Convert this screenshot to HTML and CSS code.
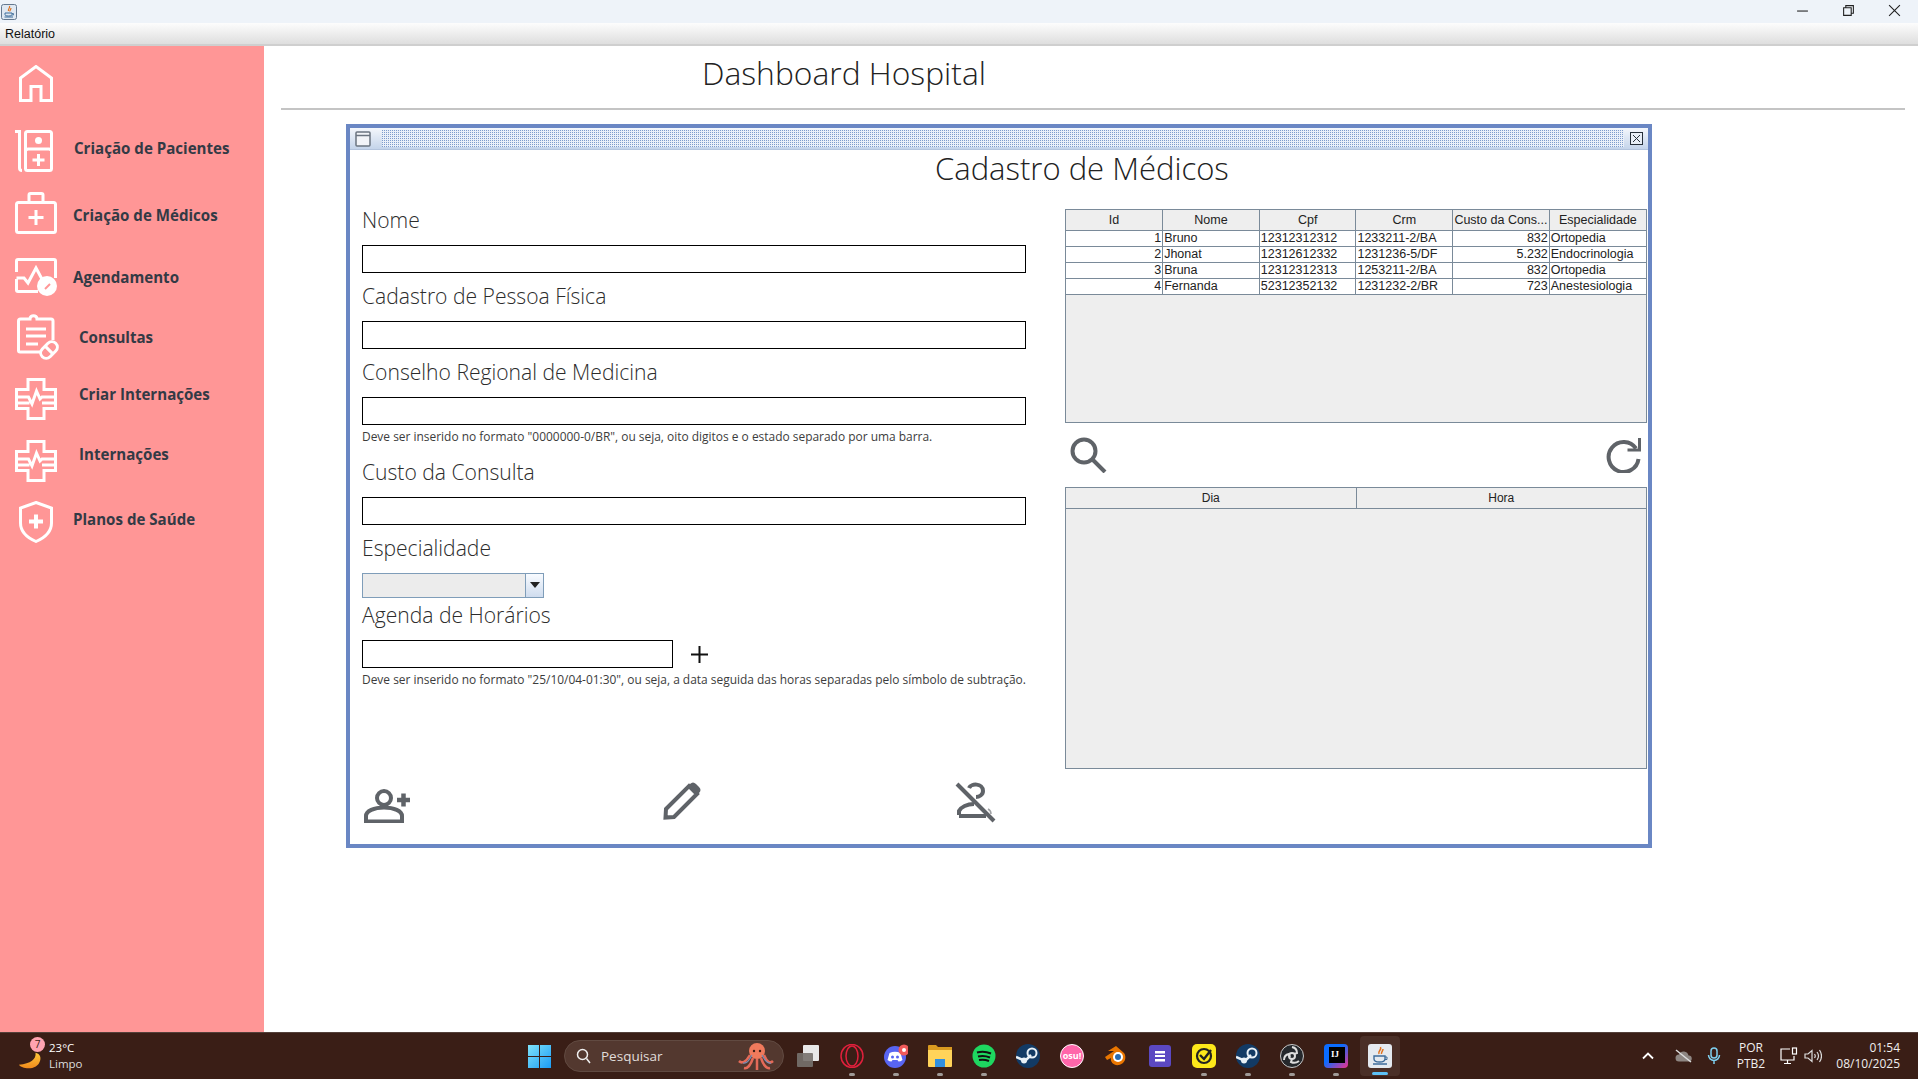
FILE: index.html
```html
<!DOCTYPE html>
<html lang="pt-BR">
<head>
<meta charset="utf-8">
<title>Dashboard Hospital</title>
<link rel="stylesheet" href="styles.css">
</head>
<body>
<div class="app">
  <header class="titlebar">
    <svg class="java-icon" viewBox="0 0 16 16"><rect x=".5" y=".5" width="15" height="15" rx="2" fill="#dfe8f2" stroke="#64788f"/><path d="M8.500 2c1 2-2 3-1 5M10 4c0 1.500-1.500 2-1 3.500" fill="none" stroke="#e0731f" stroke-width="1.200"/><path d="M4 9h7v1.500c0 1-1 1.500-3.500 1.500S4 11.500 4 10.500zM3.500 13h8.500" fill="none" stroke="#3d6c9a" stroke-width="1"/><path d="M11 9.500h1.500v1.500H11" fill="none" stroke="#3d6c9a" stroke-width=".8"/></svg>
    <div class="win-controls">
      <svg class="wc" viewBox="0 0 12 12"><path d="M1 6.500h10" class="wc-line"/></svg>
      <svg class="wc" viewBox="0 0 12 12"><path d="M1.500 3.500h7v7h-7zM3.500 3.500V1.500h7v7H8.500" class="wc-line"/></svg>
      <svg class="wc" viewBox="0 0 12 12"><path d="M1 1l10 10M11 1L1 11" class="wc-line"/></svg>
    </div>
  </header>
  <nav class="menubar"><span class="menu-item">Relatório</span></nav>

  <div class="workspace">
    <aside class="sidebar">
      <a class="nav-item n-home">
        <span class="nav-icon"><svg class="ico i-home" viewBox="0 0 34 37"><path d="M1.500 35.500V13L17 1.500 32.500 13v22.500H22v-14H12v14z"/></svg></span>
      </a>
      <a class="nav-item n-pac">
        <span class="nav-icon"><svg class="ico i-pac" viewBox="0 0 38 42"><path d="M0 1.500h4.500V38q0 2.500 2.500 2.500"/><rect x="10.500" y="1.500" width="26" height="39" rx="2"/><circle class="solid" cx="23.500" cy="10.500" r="3.500"/><path d="M11 21q0-2 2-2h21q2 0 2 2M23.500 24v12M17.500 30h12"/></svg></span>
        <span class="nav-label">Criação de Pacientes</span>
      </a>
      <a class="nav-item n-med">
        <span class="nav-icon"><svg class="ico i-wide" viewBox="0 0 42 42"><rect x="1.500" y="10.500" width="39" height="30" rx="2"/><path d="M14 10V3q0-1.500 1.500-1.500h11Q28 1.500 28 3v7M21 18v15M13.500 25.500h15"/></svg></span>
        <span class="nav-label">Criação de Médicos</span>
      </a>
      <a class="nav-item n-ag">
        <span class="nav-icon"><svg class="ico i-ag" viewBox="0 0 42 38"><path d="M1.500 14V3q0-1.500 1.500-1.500h36q1.500 0 1.500 1.500v17M1.500 21v11q0 1.500 1.500 1.500h20M1.500 20H9l4 5 8-15 7 13"/><circle class="solid" cx="32" cy="28" r="10"/><path class="tick" d="M30 31l5-5"/></svg></span>
        <span class="nav-label">Agendamento</span>
      </a>
      <a class="nav-item n-cons">
        <span class="nav-icon"><svg class="ico i-cons" viewBox="0 0 42 46"><path d="M25 38H3q-1.500 0-1.500-1.500V7Q1.500 5 3.500 5H13c0-4.500 7-4.500 7 0h14q2 0 2 2v19"/><path d="M9 15h20M9 22h20M9 30h12"/><g transform="rotate(-45 32 36)"><rect x="22.500" y="30.500" width="19" height="11" rx="5.500"/><path d="M32 30.500v11"/></g></svg></span>
        <span class="nav-label">Consultas</span>
      </a>
      <a class="nav-item n-criar">
        <span class="nav-icon"><svg class="ico i-wide" viewBox="0 0 42 42"><path d="M1.500 11.500h11.500v-10h16v10h11.500v19H29v10H13v-10H1.500z"/><path d="M1.500 19h12l3.500 7 4.500-13 3.500 8 2-2h13.500M1.500 25h13M27 25h13.500"/></svg></span>
        <span class="nav-label">Criar Internações</span>
      </a>
      <a class="nav-item n-int">
        <span class="nav-icon"><svg class="ico i-wide" viewBox="0 0 42 42"><path d="M1.500 11.500h11.500v-10h16v10h11.500v19H29v10H13v-10H1.500z"/><path d="M1.500 19h12l3.500 7 4.500-13 3.500 8 2-2h13.500M1.500 25h13M27 25h13.500"/></svg></span>
        <span class="nav-label">Internações</span>
      </a>
      <a class="nav-item n-plan">
        <span class="nav-icon"><svg class="ico i-plan" viewBox="0 0 34 42"><path d="M17 1.500 32.500 7v15C32.500 31 25 37 17 40.500 9 37 1.500 31 1.500 22V7z"/><path class="thick" d="M17 13.500v14M10 20.500h14"/></svg></span>
        <span class="nav-label">Planos de Saúde</span>
      </a>
    </aside>

    <main class="content">
      <div class="page-head"><h1 class="page-title">Dashboard Hospital</h1></div>

      <section class="frame">
        <div class="frame-bar">
          <svg class="frame-icon" viewBox="0 0 16 16"><rect x="1" y="1" width="14" height="14" rx="1" fill="#f2f4f8" stroke="#6b7480" stroke-width="1.500"/><path d="M1 4.500h14" stroke="#6b7480" stroke-width="1.500"/></svg>
          <div class="frame-dots"></div>
          <svg class="frame-close" viewBox="0 0 13 13"><rect x=".5" y=".5" width="12" height="12" fill="#e8eef6" stroke="#27303a"/><path d="M3 3l7 7M10 3l-7 7" stroke="#27303a"/></svg>
        </div>

        <div class="frame-body">
          <h2 class="frame-title">Cadastro de Médicos</h2>
          <div class="frame-columns">
            <form class="form">
              <label class="field-label">Nome</label>
              <div class="input"></div>
              <label class="field-label">Cadastro de Pessoa Física</label>
              <div class="input"></div>
              <label class="field-label">Conselho Regional de Medicina</label>
              <div class="input"></div>
              <p class="hint">Deve ser inserido no formato "0000000-0/BR", ou seja, oito digitos e o estado separado por uma barra.</p>
              <label class="field-label">Custo da Consulta</label>
              <div class="input"></div>
              <label class="field-label">Especialidade</label>
              <div class="combo"><span class="combo-arrow"></span></div>
              <label class="field-label label-tight">Agenda de Horários</label>
              <div class="agenda-row">
                <div class="input input-short"></div>
                <svg class="plus" viewBox="0 0 17 17"><path d="M8.500 0v17M0 8.500h17"/></svg>
              </div>
              <p class="hint">Deve ser inserido no formato "25/10/04-01:30", ou seja, a data seguida das horas separadas pelo símbolo de subtração.</p>
              <div class="actions">
                <svg class="act a-add" viewBox="0 0 48 34"><circle cx="21" cy="9" r="7"/><path d="M3 32.500V27c0-5 8-8.500 18-8.500S39 22 39 27v5.500z"/><path d="M34 11h13M40.500 4.500v13" class="act-thick"/></svg>
                <svg class="act a-edit" viewBox="0 0 38 38"><path d="M2.500 35.500 3 27 26 4l8 8-23 23z" fill="none"/><path class="act-fill" d="M27 2c2-2 4-2 6 0l3 3c2 2 2 4 0 6l-2 2-9-9z"/></svg>
                <svg class="act a-del" viewBox="0 0 41 41"><path d="M14 6c2-5 14-5 14 3 0 4-4 6-7 6"/><path d="M4 33v-4c2-4 8-7 15-7M4 34h27" /><path d="M33 27c2 1 3 3 3 5" class="act-faint"/><path d="M2 2l37 37"/></svg>
              </div>
            </form>

            <div class="tables">
              <div class="table-pane pane-doctors">
                <table class="grid">
                  <thead><tr><th>Id</th><th>Nome</th><th>Cpf</th><th>Crm</th><th>Custo da Cons...</th><th>Especialidade</th></tr></thead>
                  <tbody>
                    <tr><td class="num">1</td><td>Bruno</td><td>12312312312</td><td>1233211-2/BA</td><td class="num">832</td><td>Ortopedia</td></tr>
                    <tr><td class="num">2</td><td>Jhonat</td><td>12312612332</td><td>1231236-5/DF</td><td class="num">5.232</td><td>Endocrinologia</td></tr>
                    <tr><td class="num">3</td><td>Bruna</td><td>12312312313</td><td>1253211-2/BA</td><td class="num">832</td><td>Ortopedia</td></tr>
                    <tr><td class="num">4</td><td>Fernanda</td><td>52312352132</td><td>1231232-2/BR</td><td class="num">723</td><td>Anestesiologia</td></tr>
                  </tbody>
                </table>
              </div>
              <div class="table-tools">
                <svg class="tool t-search" viewBox="0 0 37 36"><circle cx="14" cy="14" r="11.500"/><path d="M22 22l13 13"/></svg>
                <svg class="tool t-refresh" viewBox="0 0 36 35"><path d="M30 10.500A15 15 0 1 0 32.500 21"/><path class="tool-fill" d="M35 0v13.500H21.500v-3H32V0z"/></svg>
              </div>
              <div class="table-pane pane-hours">
                <table class="grid grid-hours">
                  <thead><tr><th>Dia</th><th>Hora</th></tr></thead>
                </table>
              </div>
            </div>
          </div>
        </div>
      </section>
    </main>
  </div>

  <footer class="taskbar">
    <div class="weather">
      <svg class="moon" viewBox="0 0 30 24"><defs><linearGradient id="mg" x1="0" y1="0" x2="0" y2="1"><stop offset="0" stop-color="#ffc83a"/><stop offset="1" stop-color="#f08a1c"/></linearGradient></defs><path d="M22 1C23 9 16 15 1 16c4 6 24 8 27-6 1-4-1-8-6-9z" fill="url(#mg)"/></svg>
      <span class="moon-badge">7</span>
      <div class="weather-text"><span>23°C</span><span class="weather-sub">Limpo</span></div>
    </div>
    <svg class="start" viewBox="0 0 23 23"><defs><linearGradient id="sg" x1="0" y1="0" x2="1" y2="1"><stop offset="0" stop-color="#7fe3fa"/><stop offset="1" stop-color="#1b9cf5"/></linearGradient></defs><path fill="url(#sg)" d="M0 0h11v11H0zM12 0h11v11H12zM0 12h11v11H0zM12 12h11v11H12z"/></svg>
    <div class="search">
      <svg class="search-ico" viewBox="0 0 16 16"><circle cx="6.500" cy="6.500" r="5"/><path d="M10.500 10.500 14 15"/></svg>
      <span class="search-text">Pesquisar</span>
      <svg class="octopus" viewBox="0 0 36 30"><circle cx="19" cy="9" r="8" fill="#ef7a5c"/><path d="M12 13C8 20 4 22 1 19M15 16c-2 6-5 11-9 10M19 17v11M23 16c2 6 5 11 9 10M26 13c3 7 6 9 9 6" fill="none" stroke="#e56a58" stroke-width="2.500"/><path d="M14 13c-3 6-6 9-9 8M24 13c3 6 6 9 9 8" fill="none" stroke="#7b8fb8" stroke-width="1.200"/><circle cx="16" cy="9" r="1.200" fill="#3a1e16"/><circle cx="22" cy="9" r="1.200" fill="#3a1e16"/></svg>
    </div>
    <ul class="apps">
      <li class="app-slot"><svg class="app-ico" viewBox="0 0 24 24"><rect x="7" y="1" width="16" height="16" rx="1" fill="#e8e8e8"/><rect x="1" y="9" width="16" height="14" rx="1" fill="#77716d" opacity=".9"/></svg></li>
      <li class="app-slot has-dot"><svg class="app-ico" viewBox="0 0 24 24"><ellipse cx="12" cy="12" rx="11" ry="11.500" fill="none" stroke="#e0203c" stroke-width="1.500"/><ellipse cx="12" cy="12" rx="6" ry="10" fill="none" stroke="#e0203c" stroke-width="1.500"/></svg></li>
      <li class="app-slot has-dot"><svg class="app-ico" viewBox="0 0 24 24"><circle cx="11" cy="13" r="11" fill="#5865f2"/><path d="M5.500 9q5.500-2.500 11 0l2 7q-2 1.500-4 1.500l-1-1.500h-5l-1 1.500q-2 0-4-1.500z" fill="#fff"/><circle cx="8.500" cy="13" r="1.500" fill="#5865f2"/><circle cx="13.500" cy="13" r="1.500" fill="#5865f2"/><circle cx="20" cy="6" r="5.500" fill="#ef5a5a"/><circle cx="20" cy="6" r="2" fill="#fff"/></svg></li>
      <li class="app-slot has-dot"><svg class="app-ico" viewBox="0 0 24 24"><path d="M0 2q0-1 1-1h7l2 2h14v6H0z" fill="#d99a20"/><path d="M0 6h24v16q0 1-1 1H1q-1 0-1-1z" fill="#ffd35a"/><rect x="7" y="15" width="10" height="8" fill="#2f8fe0"/></svg></li>
      <li class="app-slot has-dot"><svg class="app-ico" viewBox="0 0 24 24"><circle cx="12" cy="12" r="11.500" fill="#1ed760"/><path d="M5 8.500q7-2 14 1M6 12.500q6-1.500 12 1M7 16q5-1 10 1" fill="none" stroke="#111" stroke-width="2"/></svg></li>
      <li class="app-slot"><svg class="app-ico" viewBox="0 0 24 24"><use href="#steam"/></svg></li>
      <li class="app-slot"><span class="osu">osu!</span></li>
      <li class="app-slot"><svg class="app-ico" viewBox="0 0 24 24"><path d="M1 13 10 7H4l8-5 8 7c3 4 1 11-5 12-5 1-9-3-8-7l-4 2z" fill="#ea7600"/><circle cx="14" cy="13" r="5" fill="#fff"/><circle cx="14" cy="13" r="3" fill="#2a6cb0"/></svg></li>
      <li class="app-slot"><svg class="app-ico" viewBox="0 0 24 24"><rect x="1" y="1" width="22" height="22" rx="3" fill="#5b48c2"/><path d="M7 7h10v2.500H7zM7 11h10v2H7zM7 15h10v2.500H7z" fill="#fff"/></svg></li>
      <li class="app-slot has-dot"><svg class="app-ico" viewBox="0 0 24 24"><rect width="24" height="24" rx="5" fill="#fde81a"/><circle cx="12" cy="12" r="7" fill="none" stroke="#222" stroke-width="2.200"/><path d="M8 11l4 4 7-9" fill="none" stroke="#222" stroke-width="2.400"/></svg></li>
      <li class="app-slot has-dot"><svg class="app-ico" viewBox="0 0 24 24"><defs><g id="steam"><circle cx="12" cy="12" r="12" fill="#123a64"/><path d="M0 13l9 4 6-6" fill="none" stroke="#e8f0f6" stroke-width="2.500"/><circle cx="16" cy="9" r="4.500" fill="none" stroke="#e8f0f6" stroke-width="2"/><circle cx="8" cy="16.500" r="3" fill="#e8f0f6"/></g></defs><use href="#steam"/></svg></li>
      <li class="app-slot has-dot"><svg class="app-ico" viewBox="0 0 24 24"><circle cx="12" cy="12" r="11.500" fill="#25282c" stroke="#c8c8c8"/><circle cx="12" cy="12" r="3" fill="#25282c" stroke="#ddd" stroke-width="2"/><path d="M12 3q5 1 5 6l-3 1M4 16q0-5 5-6l1 3M19 17q-4 3-8 1l1-3" fill="none" stroke="#ddd" stroke-width="2"/></svg></li>
      <li class="app-slot has-dot"><span class="ij"><span class="ij-inner">IJ</span></span></li>
      <li class="app-slot active"><svg class="app-ico java-big" viewBox="0 0 24 24"><rect width="24" height="24" rx="3" fill="#e4eaf0"/><path d="M12.500 3c1.500 3-3 4-1.500 7M15 5c0 2-2 3-1.500 5" fill="none" stroke="#e0731f" stroke-width="1.500"/><path d="M6 12h11v3c0 2-2 3-5.500 3S6 17 6 15zM5 20h14" fill="none" stroke="#3d6c9a" stroke-width="1.400"/><path d="M17 13h2v2.500h-2" fill="none" stroke="#3d6c9a"/></svg></li>
    </ul>
    <div class="tray">
      <svg class="tray-ico chev" viewBox="0 0 12 8"><path d="M1 6.500 6 1.500l5 5"/></svg>
      <svg class="tray-ico cloud" viewBox="0 0 18 14"><path class="cloud-fill" d="M4 12.500a3.500 3.500 0 0 1 0-7 5 5 0 0 1 9.500 1 3 3 0 0 1 .5 6z"/><path d="M1 1l15 12" class="cloud-slash"/></svg>
      <svg class="tray-ico mic" viewBox="0 0 14 18"><rect x="4" y="1" width="6" height="10" rx="3"/><path d="M1.500 8a5.500 5.500 0 0 0 11 0M7 13.500V17"/></svg>
      <div class="lang"><span>POR</span><span>PTB2</span></div>
      <svg class="tray-ico monitor" viewBox="0 0 18 18"><path d="M10 2H1v11h13V9M7.500 13v3M4 16.500h7"/><rect x="12.500" y="1" width="4" height="6"/></svg>
      <svg class="tray-ico speaker" viewBox="0 0 18 14"><path d="M1 5h3l4-3.500v11L4 9H1zM10.500 5q1.500 2 0 4M13 3q3 4 0 8M15.500 1q4 6 0 12"/></svg>
      <div class="clock"><span>01:54</span><span>08/10/2025</span></div>
    </div>
  </footer>
</div>
</body>
</html>
```

FILE: styles.css
```css
* { box-sizing: border-box; }
html, body { margin: 0; height: 100%; }
body { font-family: "Liberation Sans", Arial, sans-serif; background: #fff; overflow: hidden; }
.app { width: 1918px; height: 1079px; display: flex; flex-direction: column; }

.titlebar { height: 23px; background: #eef3f9; display: flex; align-items: center; justify-content: space-between; padding: 0 17px 2px 1px; }
.java-icon { width: 16px; height: 16px; margin-top: 3px; }
.win-controls { display: flex; gap: 33px; }
.wc { width: 13px; height: 13px; }
.wc-line { fill: none; stroke: #222; stroke-width: 1; }

.menubar { height: 23px; background: linear-gradient(#fdfdfd, #dedede); border-bottom: 2px solid #cfcfcf; padding: 4px 5px 0; font-size: 12.5px; color: #111; }

.workspace { height: 986px; display: flex; }

.sidebar { width: 264px; background: #ff9696; padding-top: 6px; flex: none; }
.nav-item { display: flex; align-items: center; height: 62px; color: #333a45; font: 700 15.1px "Open Sans", sans-serif; }
.nav-icon { width: 73px; display: flex; flex: none; }
.ico { fill: none; stroke: #fff; stroke-width: 3; display: block; }
.ico .solid { fill: #fff; stroke: none; }
.ico .tick { stroke: #ff9696; stroke-width: 2; }
.ico .thick { stroke-width: 4; }
.i-home { width: 34px; height: 37px; margin-left: 19px; }
.i-pac { width: 38px; height: 42px; margin-left: 15px; }
.i-wide { width: 42px; height: 42px; margin-left: 15px; }
.i-ag { width: 42px; height: 38px; margin-left: 15px; }
.i-cons { width: 42px; height: 46px; margin-left: 17px; }
.i-plan { width: 34px; height: 42px; margin-left: 19px; }
.n-pac { margin-top: 6px; }
.n-pac .nav-label { margin: 0 0 6px 1px; }
.n-med .nav-label { margin-top: 4px; }
.n-ag { margin-top: 2px; }
.n-cons { margin-top: -2px; }
.n-cons .nav-label { margin-left: 6px; }
.n-criar .nav-label { margin: 0 0 10px 6px; }
.n-int .nav-label { margin: 0 0 14px 6px; }
.n-plan { margin-top: -1px; }
.n-plan .nav-label { margin-bottom: 6px; }

.content { flex: 1; min-width: 0; }
.page-head { height: 64px; margin: 0 13px 0 17px; border-bottom: 2px solid #c4c4c4; }
.page-title { margin: 0; padding: 5px 0 0 421px; font: 300 31.8px/44px "Open Sans", sans-serif; color: #222; }

.frame { width: 1306px; height: 724px; margin: 14px 0 0 82px; border: 4px solid #6a87c4; background: #fff; display: flex; flex-direction: column; }
.frame-bar { height: 22px; flex: none; display: flex; align-items: center; padding: 0 5px 0 5px; background: linear-gradient(#f4f7fc, #c4d4ea); border-bottom: 1px solid #b3c4dd; }
.frame-icon { width: 16px; height: 16px; }
.frame-dots { flex: 1; height: 17px; margin: 0 6px 0 11px; background: conic-gradient(from 270deg at 1px 1px, #7e9ccc 90deg, #eaf0f9 0) 0 0 / 2px 2px; }
.frame-close { width: 13px; height: 13px; }

.frame-body { flex: 1; min-height: 0; }
.frame-title { margin: 0; height: 47px; padding-left: 585px; font: 300 31px/36px "Open Sans", sans-serif; color: #222; }
.frame-columns { display: flex; padding-left: 12px; }

.form { width: 664px; flex: none; }
.field-label { display: flex; align-items: center; height: 48px; padding-bottom: 4px; font: 300 21.1px "Open Sans", sans-serif; color: #2c2c2c; }
.label-tight { height: 42px; padding-bottom: 10px; }
.input { height: 28px; border: 1px solid #000; background: #fff; }
.input-short { width: 311px; }
.hint { margin: 0; height: 24px; font: 400 11.95px/24px "Open Sans", sans-serif; color: #3c3c3c; white-space: nowrap; }
.combo { width: 182px; height: 25px; position: relative; background: #ececec; border: 1px solid #7f9db9; }
.combo-arrow { position: absolute; top: 0; right: 0; bottom: 0; width: 18px; background: linear-gradient(#f8fbff, #cfdcee); border-left: 1px solid #7f9db9; }
.combo-arrow::after { content: ""; position: absolute; left: 4px; top: 8px; border: 5px solid transparent; border-top: 6px solid #222; border-bottom: 0; }
.agenda-row { display: flex; align-items: center; gap: 18px; }
.plus { width: 17px; height: 17px; fill: none; stroke: #111; stroke-width: 2; }
.actions { display: grid; grid-template-columns: 300px 292px 1fr; margin: 90px 0 0 1px; align-items: start; }
.act { fill: none; stroke: #5f6368; stroke-width: 4; display: block; }
.a-add { width: 48px; height: 34px; margin-top: 7px; }
.a-edit { width: 38px; height: 38px; }
.a-del { width: 41px; height: 41px; }
.act-thick { stroke-width: 4.500; }
.act-fill { fill: #5f6368; stroke: none; }
.act-faint { stroke-width: 1.500; opacity: .6; }

.tables { width: 582px; margin: 12px 0 0 39px; flex: none; display: flex; flex-direction: column; }
.table-pane { background: #eeeeee; border: 1px solid #7a8a99; }
.pane-doctors { height: 214px; }
.pane-hours { height: 282px; }
.grid { border-collapse: collapse; table-layout: fixed; width: 100%; font-size: 12.5px; color: #222; }
.grid th { font-weight: 400; height: 20px; padding: 0; background: #eeeeee; border: 1px solid #7a8a99; border-top: 0; white-space: nowrap; overflow: hidden; }
.grid th:first-child, .grid td:first-child { border-left: 0; }
.grid th:last-child, .grid td:last-child { border-right: 0; }
.grid td { height: 16px; line-height: 14px; padding: 0 1px; background: #fff; border: 1px solid #7a8a99; white-space: nowrap; overflow: hidden; }
.grid .num { text-align: right; }
.grid-hours th { height: 20px; font-size: 12px; }
.table-tools { height: 64px; display: flex; align-items: center; justify-content: space-between; padding: 0 5px; }
.tool { fill: none; stroke: #5f6368; stroke-width: 4; display: block; }
.t-search { width: 37px; height: 36px; }
.t-refresh { width: 36px; height: 35px; }
.tool-fill { fill: #5f6368; stroke: none; }

.taskbar { height: 47px; background: #3a1e16; border-top: 1px solid #54403a; display: flex; align-items: center; position: relative; color: #fff; font: 400 11.5px "Open Sans", sans-serif; }
.weather { width: 528px; display: flex; align-items: center; padding-left: 18px; position: relative; flex: none; }
.moon { width: 24px; height: 19px; margin-top: 10px; }
.moon-badge { position: absolute; left: 30px; top: -3px; width: 15px; height: 15px; border-radius: 50%; background: #ffa3b0; color: #3a1e16; font-size: 10px; line-height: 15px; text-align: center; }
.weather-text { display: flex; flex-direction: column; margin-left: 7px; line-height: 16px; }
.weather-sub { color: #ddd; }
.start { width: 23px; height: 23px; flex: none; }
.search { width: 220px; height: 32px; margin-left: 13px; margin-right: 2px; background: #53382f; border-radius: 16px; border: 1px solid #614a41; display: flex; align-items: center; padding-left: 11px; flex: none; position: relative; }
.search-ico { width: 16px; height: 16px; fill: none; stroke: #f0f0f0; stroke-width: 1.500; }
.search-text { margin-left: 9px; font-size: 13.5px; color: #e0dcda; }
.octopus { position: absolute; right: 9px; top: 1px; width: 36px; height: 30px; }
.apps { list-style: none; margin: 0; padding: 0; display: flex; flex: none; }
.app-slot { width: 44px; height: 40px; display: flex; align-items: center; justify-content: center; position: relative; }
.app-ico { width: 24px; height: 24px; display: block; }
.has-dot::after { content: ""; position: absolute; left: 19px; bottom: 0; width: 6px; height: 3px; border-radius: 2px; background: #a09a96; }
.active::before { content: ""; position: absolute; left: 2px; top: 0; right: 2px; bottom: 0; background: #4a2f27; border-radius: 4px; }
.active::after { content: ""; position: absolute; left: 14px; bottom: 1px; width: 16px; height: 3px; border-radius: 2px; background: #5cc0f5; }
.java-big { position: relative; }
.osu { width: 24px; height: 24px; border-radius: 50%; background: #ff66aa; border: 1px solid #fff; font: 700 9px/22px "Open Sans", sans-serif; text-align: center; color: #fff; }
.ij { width: 24px; height: 24px; border-radius: 4px; background: linear-gradient(135deg, #0a6cff 40%, #f0308a); padding: 3px 0 0 5px; display: block; }
.ij-inner { display: block; width: 16px; height: 16px; background: #000; color: #fff; font: 700 9px/14px "Liberation Serif", serif; padding-left: 2px; }

.tray { flex: 1; position: relative; display: flex; align-items: center; padding-left: 240px; }
.tray-ico { fill: none; stroke: #fff; stroke-width: 1.200; display: block; flex: none; }
.chev { width: 12px; height: 8px; stroke-width: 1.800; }
.cloud { width: 18px; height: 14px; margin-left: 21px; }
.cloud-fill { fill: #8e8682; stroke: none; }
.cloud-slash { stroke: #ddd; stroke-width: 1.500; }
.mic { width: 14px; height: 18px; margin-left: 14px; stroke: #7fd0f0; stroke-width: 1.500; }
.lang { width: 50px; margin-left: 5px; display: flex; flex-direction: column; align-items: center; line-height: 16px; font-size: 12px; color: #f0eeee; }
.monitor { width: 18px; height: 18px; margin-left: 4px; }
.speaker { width: 18px; height: 14px; margin-left: 6px; stroke: #ddd; }
.clock { margin-left: auto; width: 70px; margin-right: 18px; display: flex; flex-direction: column; align-items: flex-end; line-height: 16px; font-size: 12px; color: #f0eeee; }
```
